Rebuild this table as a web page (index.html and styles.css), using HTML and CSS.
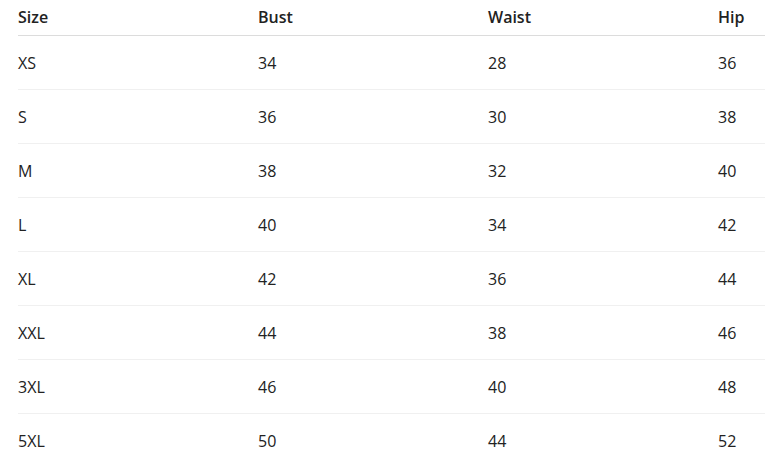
FILE: index.html
```html
<!DOCTYPE html>
<html>
<head>
<meta charset="utf-8">
<link rel="stylesheet" href="styles.css">
</head>
<body>
<div class="wrap">
<table class="size-table">
<colgroup><col class="c1"><col class="c2"><col class="c3"><col class="c4"></colgroup>
<thead>
<tr><th>Size</th><th>Bust</th><th>Waist</th><th>Hip</th></tr>
</thead>
<tbody>
<tr><td>XS</td><td>34</td><td>28</td><td>36</td></tr>
<tr><td>S</td><td>36</td><td>30</td><td>38</td></tr>
<tr><td>M</td><td>38</td><td>32</td><td>40</td></tr>
<tr><td>L</td><td>40</td><td>34</td><td>42</td></tr>
<tr><td>XL</td><td>42</td><td>36</td><td>44</td></tr>
<tr><td>XXL</td><td>44</td><td>38</td><td>46</td></tr>
<tr><td>3XL</td><td>46</td><td>40</td><td>48</td></tr>
<tr><td>5XL</td><td>50</td><td>44</td><td>52</td></tr>
</tbody>
</table>
</div>
</body>
</html>
```
FILE: styles.css
```css
html, body {
  margin: 0;
  padding: 0;
  background: #fff;
  overflow: hidden;
}
.wrap {
  padding-left: 18px;
}
.size-table {
  width: 747px;
  border-collapse: collapse;
  table-layout: fixed;
  font-family: "Open Sans", "Noto Sans", sans-serif;
  font-size: 16px;
  color: #222;
}
.c1 { width: 240px; }
.c2 { width: 230px; }
.c3 { width: 230px; }
.c4 { width: 47px; }
.size-table th {
  text-align: left;
  font-weight: 600;
  height: 33px;
  padding: 0 0 2px 0;
  vertical-align: middle;
  border-bottom: 1px solid #dcdcdc;
  line-height: 20px;
}
.size-table td {
  height: 52px;
  padding: 1px 0 0 0;
  vertical-align: middle;
  border-bottom: 1px solid #f0f0f0;
  line-height: 20px;
}
```
